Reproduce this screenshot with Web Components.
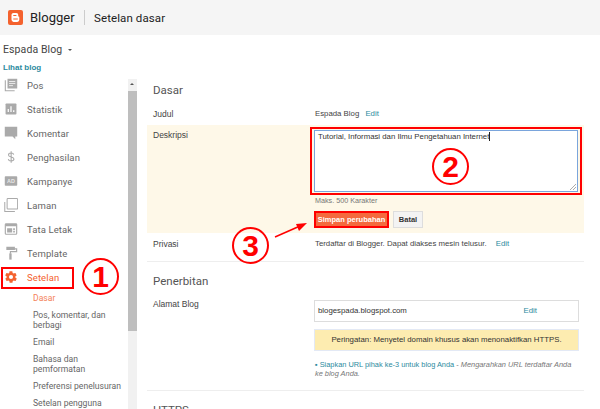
<!DOCTYPE html>
<html>
<head>
<meta charset="utf-8">
<style>
	html, body { margin: 0; height: 100%; overflow: hidden; background: #fff; }
	body { font-family: "Liberation Sans", Arial, sans-serif; width: 600px; height: 409px; }
</style>
</head>
<body>
<blogger-app></blogger-app>
<script>
const ICONS = {
	pos: `<path fill="none" stroke="#aaa" stroke-width="1.4" d="M1.7 3v13.300h12"/><rect x="4.500" y="1" width="12.500" height="12.500" fill="#aaa"/><path stroke="#eee" stroke-width="1.2" d="M6.500 4.500h8M6.500 7h8M6.500 9.800h5"/>`,
	stat: `<rect x="2" y="2" width="14" height="14" rx="1" fill="#aaa"/><path stroke="#fff" stroke-width="1.6" d="M5.500 13V9M9 13V5.500M12.500 13v-2.500"/>`,
	comment: `<path fill="#aaa" d="M1 1h16v12.500h-2.500V17l-3.500-3.500H1z"/>`,
	money: `<path fill="none" stroke="#aaa" stroke-width="1.400" d="M12.500 5.800C12.200 4.400 11 3.800 9.200 3.800c-2 0-3.400 1-3.400 2.500 0 3.600 7 1.900 7 5.400 0 1.500-1.500 2.500-3.600 2.500-2 0-3.400-.9-3.700-2.500M9.200 1.500v15"/>`,
	ad: `<rect x="1" y="3" width="16" height="12" rx="1" fill="#aaa"/><text x="9" y="11.500" font-family="Liberation Sans" font-size="7" font-weight="bold" fill="#e8e8e8" text-anchor="middle">AD</text>`,
	pages: `<path fill="none" stroke="#aaa" stroke-width="1.300" d="M1 5v12.500h13"/><rect x="4" y=".7" width="13.500" height="13.500" rx="1" fill="#fff" stroke="#aaa" stroke-width="1.300"/>`,
	layout: `<rect x="1.700" y="2.200" width="14.600" height="13.600" rx="1" fill="none" stroke="#aaa" stroke-width="1.500"/><path fill="#aaa" d="M2 2.500h14v3H2zM4 8h6.500v5.500H4zM11.800 8H14v2.200h-2.200zM11.800 11.300H14v2.200h-2.200z"/>`,
	template: `<path fill="#aaa" d="M3 1h11v2h3v5H9v2H7.500V6.500h8V4.500H14V5H3z"/><rect x="6.800" y="9.500" width="3" height="8" fill="#aaa"/>`
};

class BloggerHeader extends HTMLElement {
	connectedCallback() {
		this.attachShadow({mode: "open"}).innerHTML = `
			<style>
				:host { display: flex; align-items: center; height: 35px; background: #f5f5f5; padding-left: 8px; color: #222; }
				svg { width: 15px; height: 15px; display: block; }
				.name { font: 13px Roboto, sans-serif; margin-left: 7px; width: 44px; }
				.bar { width: 1px; height: 15px; background: #ccc; margin: 0 9px 0 10px; }
				.title { font: 11.500px Roboto, sans-serif; letter-spacing: .1px; }
			</style>
			<svg viewBox="0 0 15 15">
				<rect width="15" height="15" rx="2" fill="#f4622e"/>
				<path fill="#fff" d="M5.500 3h2.700c1.300 0 2 .8 2 1.800v1.300c0 .4.200.5.500.5.400 0 .6.300.6.700v2.400c0 1.200-.9 2.300-2.200 2.300H5.500C4.300 11.500 3.500 10.600 3.500 9.500V5C3.500 3.900 4.300 3 5.500 3z"/>
				<path stroke="#f4622e" stroke-width="1" stroke-linecap="round" d="M5.700 5.500h2.300M5.700 9h3.700"/>
			</svg>
			<span class="name">Blogger</span><span class="bar"></span><span class="title">Setelan dasar</span>
		`;
	}
}
customElements.define("blogger-header", BloggerHeader);

class NavItem extends HTMLElement {
	connectedCallback() {
		let icon = ICONS[this.getAttribute("icon")] || "";
		this.attachShadow({mode: "open"}).innerHTML = `
			<style>
				:host { display: flex; align-items: center; height: 24px; padding-left: 4px; color: #666; font: 9.500px Roboto, sans-serif; letter-spacing: .1px; }
				svg { width: 14px; height: 14px; margin-right: 9px; flex: none; }
			</style>
			<svg viewBox="0 0 18 18">${icon}</svg><slot></slot>
		`;
	}
}
customElements.define("nav-item", NavItem);

class BloggerSidebar extends HTMLElement {
	connectedCallback() {
		this.attachShadow({mode: "open"}).innerHTML = `
			<style>
				:host { display: flex; width: 137px; flex: none; height: 336px; overflow: hidden; }
				.list { flex: 1; min-width: 0; }
				.scroll { width: 9px; margin-top: 6px; background: #f1f1f1; display: flex; flex-direction: column; flex: none; }
				.scroll .up { height: 12px; position: relative; }
				.scroll .up::after { content: ""; position: absolute; left: 2px; top: 4px; border: 2.500px solid transparent; border-bottom-color: #555; border-top: 0; }
				.scroll .thumb { height: 240px; background: #bebebe; }
				nav-item.on { color: #f4622e; }
				.sub { font: 8.600px Roboto, sans-serif; color: #666; line-height: 10px; padding-left: 33px; margin-top: 4px; }
				.sub div { margin-bottom: 7px; }
				.sub .cur { color: #f4825a; }
			</style>
			<div class="list">
				<nav-item icon="pos">Pos</nav-item>
				<nav-item icon="stat">Statistik</nav-item>
				<nav-item icon="comment">Komentar</nav-item>
				<nav-item icon="money">Penghasilan</nav-item>
				<nav-item icon="ad">Kampanye</nav-item>
				<nav-item icon="pages">Laman</nav-item>
				<nav-item icon="layout">Tata Letak</nav-item>
				<nav-item icon="template">Template</nav-item>
				<nav-item class="on">Setelan</nav-item>
				<div class="sub">
					<div class="cur">Dasar</div>
					<div>Pos, komentar, dan<br>berbagi</div>
					<div>Email</div>
					<div>Bahasa dan<br>pemformatan</div>
					<div>Preferensi penelusuran</div>
					<div>Setelan pengguna</div>
				</div>
			</div>
			<div class="scroll"><div class="up"></div><div class="thumb"></div></div>
		`;
	}
}
customElements.define("blogger-sidebar", BloggerSidebar);

class BlogBar extends HTMLElement {
	connectedCallback() {
		this.attachShadow({mode: "open"}).innerHTML = `
			<style>
				:host { display: block; height: 38px; box-sizing: border-box; padding: 9px 0 0 3px; }
				.blog { font: 10.500px/12px Roboto, sans-serif; letter-spacing: .1px; color: #444; }
				.blog i { display: inline-block; border: 2.500px solid transparent; border-top-color: #555; border-bottom: 0; margin: 0 0 2px 6px; }
				.view { font: bold 8px/10px "Liberation Sans", sans-serif; color: #2b8a9e; margin-top: 7px; }
			</style>
			<div class="blog">Espada Blog<i></i></div>
			<div class="view">Lihat blog</div>
		`;
	}
}
customElements.define("blog-bar", BlogBar);

class SettingRow extends HTMLElement {
	connectedCallback() {
		this.attachShadow({mode: "open"}).innerHTML = `
			<style>
				:host { display: flex; font-size: 8.500px; line-height: 10px; color: #444; }
				:host([hl]) { background: #fef8e8; }
				.label { width: 161px; padding-left: 6px; flex: none; }
				.val { flex: 1; min-width: 0; font-size: 7.800px; color: #444; }
			</style>
			<div class="label"><slot name="label"></slot></div>
			<div class="val"><slot></slot></div>
		`;
	}
}
customElements.define("setting-row", SettingRow);

class BloggerMain extends HTMLElement {
	connectedCallback() {
		this.attachShadow({mode: "open"}).innerHTML = `
			<style>
				:host { display: block; flex: 1; min-width: 0; height: 330px; margin-top: 6px; overflow: hidden; padding: 4px 16px 0 10px; box-sizing: border-box; font-family: "Liberation Sans", sans-serif; }
				h2 { font: 11.500px/14px Roboto, sans-serif; color: #555; margin: 0; padding-left: 6px; }
				a { color: #2b8a9e; margin-left: 4px; }
				.pad { padding-left: 1px; }
				.judul { margin-top: 12px; height: 16px; }
				.desc { padding-top: 5px; padding-bottom: 5px; }
				.desc-box { width: 264px; height: 62px; border: 1px solid #7aa5dc; background: #fff; padding: 1px 3px; box-sizing: border-box; color: #333; position: relative; }
				.desc-box::before { content: ""; position: absolute; inset: -4px -5px; border: 2px solid #f00; }
				.desc-box svg { position: absolute; right: 1px; bottom: 1px; width: 6px; height: 6px; }
				.caret { display: inline-block; width: 1px; height: 9px; background: #222; vertical-align: -2px; }
				.hint { color: #777; margin-top: 4px; font-size: 7.200px; line-height: 9px; padding-left: 1px; }
				.btns { display: flex; gap: 4px; margin-top: 6px; }
				.save { width: 75px; height: 17px; box-sizing: border-box; border: 2px solid #f00; background: #f46a3e; color: #fff; font-weight: bold; font-size: 7.500px; display: flex; align-items: center; justify-content: center; white-space: nowrap; }
				.cancel { width: 30px; height: 17px; background: #f3f3f3; border: 1px solid #ddd; box-sizing: border-box; color: #333; font-weight: bold; font-size: 7.500px; display: flex; align-items: center; justify-content: center; }
				.priv { padding-top: 6px; height: 28px; box-sizing: border-box; }
				.priv a { margin-left: 7px; }
				hr { border: 0; border-top: 1px solid #eee; margin: 0; }
				.pub { padding-top: 12px; }
				.pub setting-row { margin-top: 11px; }
				.addr { width: 265px; height: 22px; margin-top: 1px; border: 1px solid #ddd; box-sizing: border-box; display: flex; justify-content: space-between; align-items: center; padding: 0 41px 0 3px; color: #333; }
				.addr a { margin: 0; }
				.warn { width: 265px; height: 22px; margin-top: 7px; background: #fdecb0; border: 1px solid #e3e9f5; box-sizing: border-box; color: #333; display: flex; align-items: center; justify-content: center; }
				.url { width: 265px; margin-top: 9px; line-height: 9px; font-size: 7.400px; color: #777; padding-left: 1px; box-sizing: border-box; }
				.url a { margin: 0; }
				.https { margin-top: 12px; }
				.https-h { margin-top: 12px; }
			</style>
			<h2>Dasar</h2>
			<setting-row class="judul"><span slot="label">Judul</span><div class="pad">Espada Blog <a>Edit</a></div></setting-row>
			<setting-row class="desc" hl><span slot="label">Deskripsi</span>
				<div class="desc-box">Tutorial, Informasi dan Ilmu Pengetahuan Internet<span class="caret"></span><svg viewBox="0 0 6 6"><path stroke="#888" stroke-width=".7" d="M0 6l6-6M3 6l3-3"/></svg></div>
				<div class="hint">Maks. 500 Karakter</div>
				<div class="btns"><span class="save">Simpan perubahan</span><span class="cancel">Batal</span></div>
			</setting-row>
			<setting-row class="priv"><span slot="label">Privasi</span><div class="pad">Terdaftar di Blogger. Dapat diakses mesin telusur. <a>Edit</a></div></setting-row>
			<hr>
			<div class="pub">
				<h2>Penerbitan</h2>
				<setting-row><span slot="label">Alamat Blog</span>
					<div class="addr"><span>blogespada.blogspot.com</span><a>Edit</a></div>
					<div class="warn">Peringatan: Menyetel domain khusus akan menonaktifkan HTTPS.</div>
					<div class="url"><a>▪ Siapkan URL pihak ke-3 untuk blog Anda</a> - <i>Mengarahkan URL terdaftar Anda ke blog Anda.</i></div>
				</setting-row>
			</div>
			<hr class="https">
			<h2 class="https-h">HTTPS</h2>
		`;
	}
}
customElements.define("blogger-main", BloggerMain);

class CircleMark extends HTMLElement {
	connectedCallback() {
		this.attachShadow({mode: "open"}).innerHTML = `
			<style>
				:host { position: absolute; width: 37px; height: 37px; box-sizing: border-box; border: 2.500px solid #f00; border-radius: 50%; color: #f00; font: bold 30px "Liberation Sans", sans-serif; display: flex; align-items: center; justify-content: center; }
			</style>
			<slot></slot>
		`;
	}
}
customElements.define("circle-mark", CircleMark);

class BloggerApp extends HTMLElement {
	connectedCallback() {
		this.attachShadow({mode: "open"}).innerHTML = `
			<style>
				:host { display: block; width: 600px; height: 409px; position: relative; overflow: hidden; }
				.body { display: flex; }
				.box { position: absolute; left: 1px; top: 267px; width: 73px; height: 22px; border: 2px solid #f00; box-sizing: border-box; }
				.gear { position: absolute; left: 4px; top: 270px; width: 14px; height: 14px; }
				svg.arrow { position: absolute; left: 270px; top: 218px; width: 40px; height: 24px; }
			</style>
			<blogger-header></blogger-header>
			<blog-bar></blog-bar>
			<div class="body"><blogger-sidebar></blogger-sidebar><blogger-main></blogger-main></div>
			<div class="box"></div>
			<svg class="gear" viewBox="0 0 24 24"><path fill="#f4622e" d="M19.400 13c.1-.3.100-.7.100-1s0-.7-.1-1l2.100-1.600c.2-.2.200-.4.100-.6l-2-3.500c-.1-.2-.4-.3-.6-.2l-2.500 1c-.5-.4-1.100-.7-1.700-1l-.4-2.600c0-.3-.2-.4-.5-.4h-4c-.3 0-.5.100-.5.400l-.4 2.600c-.6.300-1.100.6-1.700 1l-2.500-1c-.2-.1-.5 0-.6.200l-2 3.500c-.1.200-.1.500.1.600L4.600 11c0 .3-.1.700-.1 1s0 .7.100 1l-2.100 1.600c-.2.200-.2.400-.1.600l2 3.500c.1.200.4.300.6.200l2.500-1c.5.400 1.100.7 1.700 1l.4 2.600c0 .3.200.4.500.4h4c.3 0 .5-.1.500-.4l.4-2.600c.6-.3 1.200-.6 1.700-1l2.500 1c.2.100.5 0 .6-.2l2-3.500c.1-.2.100-.5-.1-.6zM12 15.500a3.500 3.500 0 1 1 0-7 3.500 3.500 0 0 1 0 7z"/></svg>
			<circle-mark style="left:82px;top:258px">1</circle-mark>
			<circle-mark style="left:432px;top:148px">2</circle-mark>
			<circle-mark style="left:232px;top:227px">3</circle-mark>
			<svg class="arrow" viewBox="0 0 40 24"><path stroke="#f00" stroke-width="1.500" d="M5 19L30 8"/><path fill="#f00" d="M37 5l-11 1 3 7z"/></svg>
		`;
	}
}
customElements.define("blogger-app", BloggerApp);
</script>
</body>
</html>
